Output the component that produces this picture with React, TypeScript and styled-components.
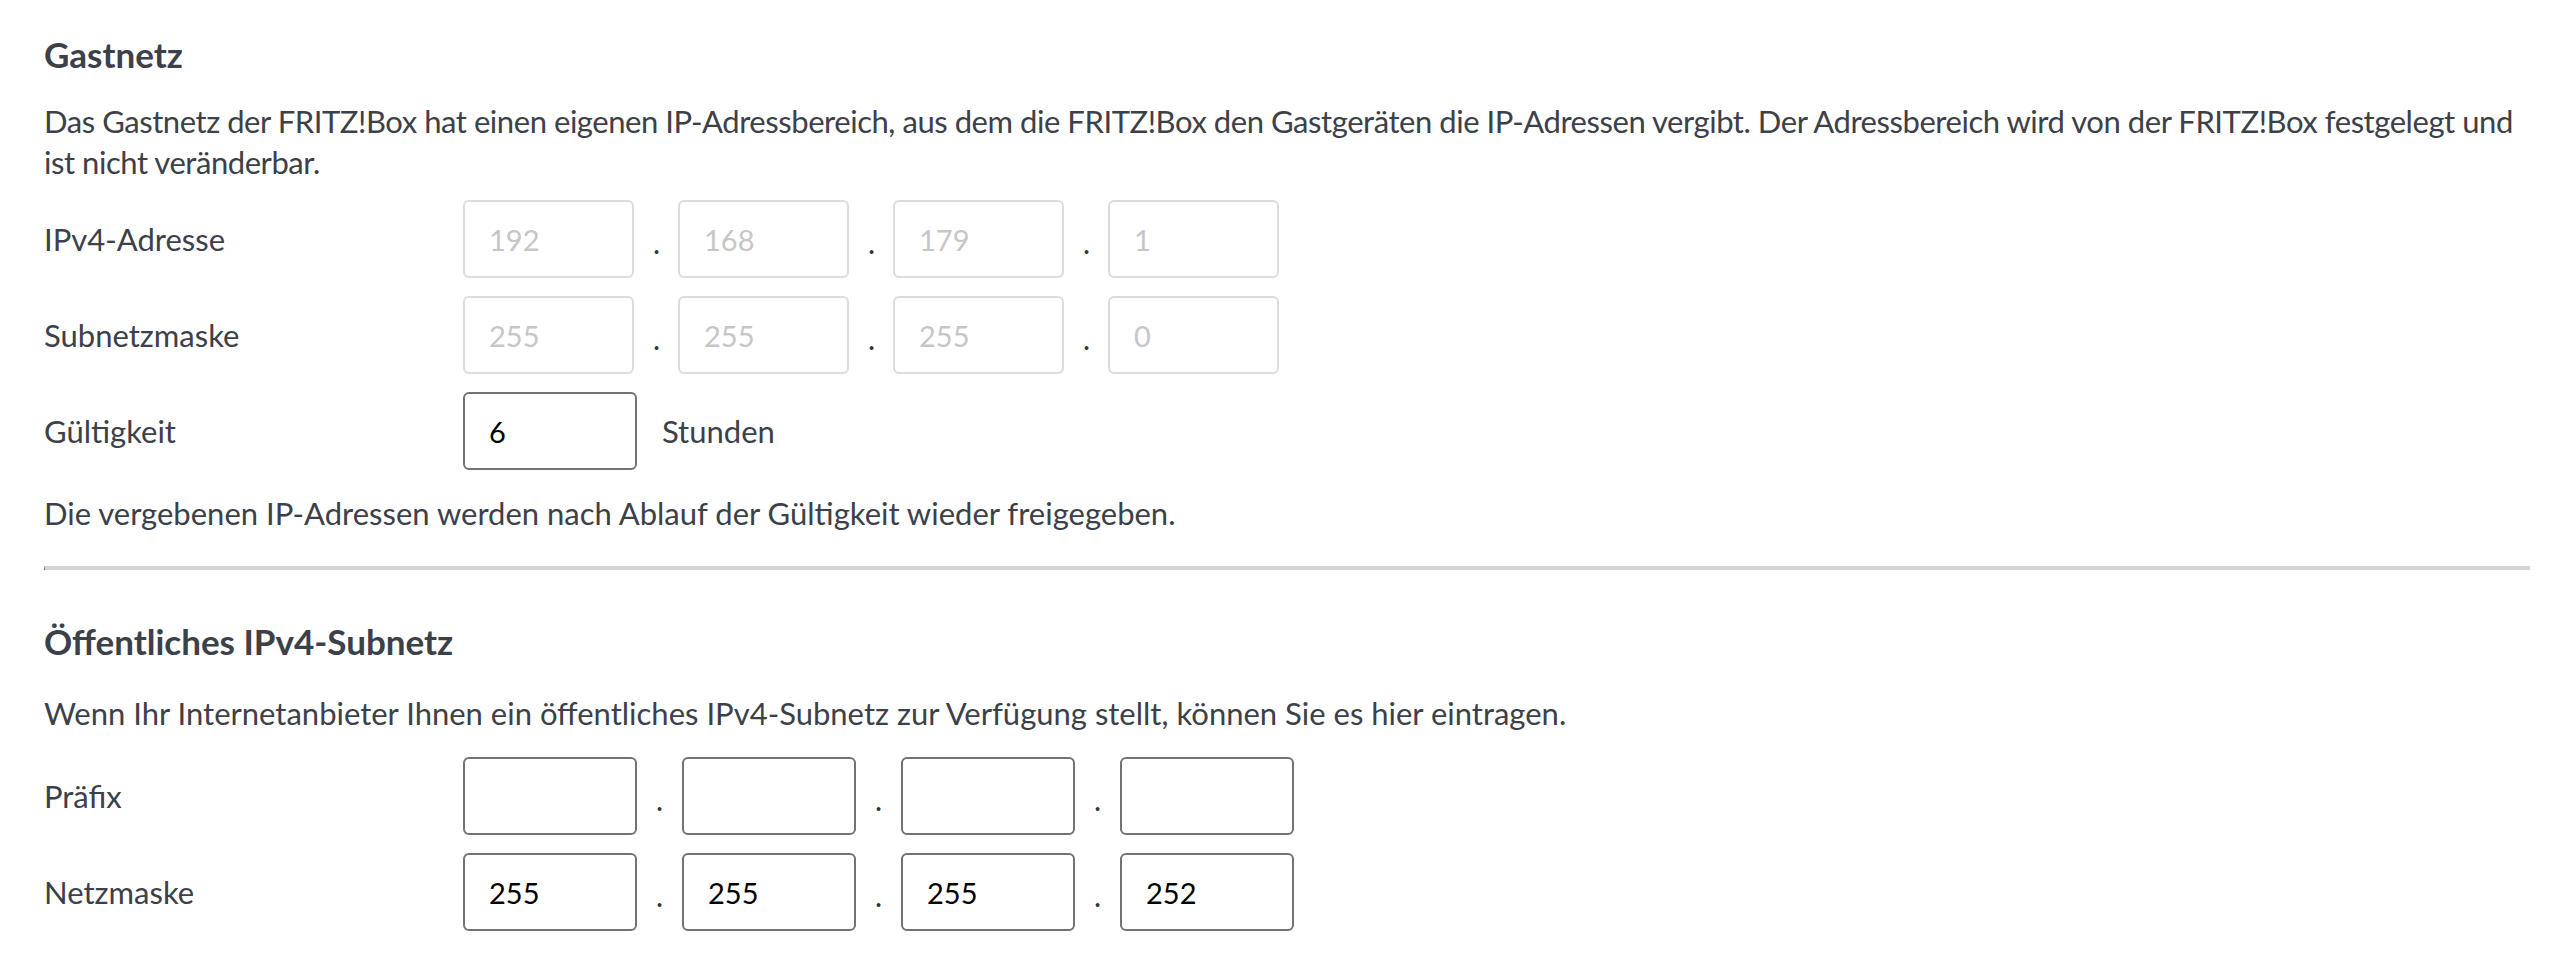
import { FC } from 'react';
import styled, { createGlobalStyle } from 'styled-components';

const GlobalStyle = createGlobalStyle`
  html, body {
    margin: 0;
    background: #fff;
  }
  body {
    font-family: Lato, "Open Sans", sans-serif;
    color: #3c4048;
  }
`;

type Octets = { label: string; values: string[]; enabled?: boolean };

const Octet: FC<{ value: string; enabled?: boolean }> = ({ value, enabled }) => (
  <Input
    type="text"
    defaultValue={value}
    disabled={!enabled}
    $enabled={!!enabled}
  />
);

const OctetRow: FC<Octets> = ({ label, values, enabled }) => (
  <Row>
    <Label>{label}</Label>
    {values.map((v, i) => (
      <Group key={i}>
        {i > 0 && <Dot $enabled={!!enabled}>.</Dot>}
        <Octet value={v} enabled={enabled} />
      </Group>
    ))}
  </Row>
);

const App: FC = () => {
  return (
    <Page>
      <GlobalStyle />
      <Section>
        <Title>Gastnetz</Title>
        <Text $top={27} $tight>
          Das Gastnetz der FRITZ!Box hat einen eigenen IP-Adressbereich, aus dem die
          FRITZ!Box den Gastgeräten die IP-Adressen vergibt. Der Adressbereich wird von
          der FRITZ!Box festgelegt und ist nicht veränderbar.
        </Text>
        <Fields $top={17}>
          <OctetRow label="IPv4-Adresse" values={['192', '168', '179', '1']} />
          <OctetRow label="Subnetzmaske" values={['255', '255', '255', '0']} />
          <Row>
            <Label>Gültigkeit</Label>
            <Octet value="6" enabled />
            <Unit>Stunden</Unit>
          </Row>
        </Fields>
        <Text $top={23}>
          Die vergebenen IP-Adressen werden nach Ablauf der Gültigkeit wieder freigegeben.
        </Text>
      </Section>

      <Divider />

      <Section>
        <Title>Öffentliches IPv4-Subnetz</Title>
        <Text $top={32}>
          Wenn Ihr Internetanbieter Ihnen ein öffentliches IPv4-Subnetz zur Verfügung
          stellt, können Sie es hier eintragen.
        </Text>
        <Fields $top={23}>
          <OctetRow label="Präfix" values={['', '', '', '']} enabled />
          <OctetRow label="Netzmaske" values={['255', '255', '255', '252']} enabled />
        </Fields>
      </Section>
    </Page>
  );
};

const Page = styled.main`
  padding: 34px 24px 34px 44px;
`;

const Section = styled.section`
  display: flex;
  flex-direction: column;
`;

const Title = styled.h2`
  margin: 0;
  font-size: 35px;
  line-height: 40px;
  font-weight: 700;
  color: #3c4048;
`;

const Text = styled.p<{ $top: number; $tight?: boolean }>`
  margin: ${p => p.$top}px 0 0;
  font-size: 31px;
  line-height: 41px;
  letter-spacing: ${p => (p.$tight ? '-0.45px' : 'normal')};
`;

const Fields = styled.div<{ $top: number }>`
  margin-top: ${p => p.$top}px;
  display: flex;
  flex-direction: column;
  gap: 18px;
`;

const Row = styled.div`
  display: flex;
  align-items: center;
  height: 78px;
`;

const Label = styled.span`
  flex: 0 0 419px;
  font-size: 31px;
`;

const Group = styled.div`
  display: flex;
  align-items: center;
`;

const Dot = styled.span<{ $enabled: boolean }>`
  width: ${p => (p.$enabled ? 45 : 44)}px;
  padding-left: 19px;
  box-sizing: border-box;
  font-size: 30px;
  line-height: 30px;
  margin-top: 6px;
  color: #333;
`;

const Input = styled.input<{ $enabled: boolean }>`
  box-sizing: border-box;
  width: ${p => (p.$enabled ? 174 : 171)}px;
  height: 78px;
  margin: 0;
  padding: 0 0 0 24px;
  border: 2px solid ${p => (p.$enabled ? '#737373' : '#dcdcdc')};
  border-radius: 6px;
  background: #fff;
  font-family: Lato, "Open Sans", sans-serif;
  font-size: 29px;
  color: ${p => (p.$enabled ? '#000' : '#c6c6c6')};
  -webkit-text-fill-color: ${p => (p.$enabled ? '#000' : '#c6c6c6')};
  opacity: 1;
  outline: none;
`;

const Unit = styled.span`
  margin-left: 25px;
  font-size: 31px;
`;

const Divider = styled.hr`
  margin: 32px 0 51px;
  height: 0;
  border: none;
  border-top: 4px solid #d4d4d4;
  border-left: 1px solid #555;
`;

export default App;
